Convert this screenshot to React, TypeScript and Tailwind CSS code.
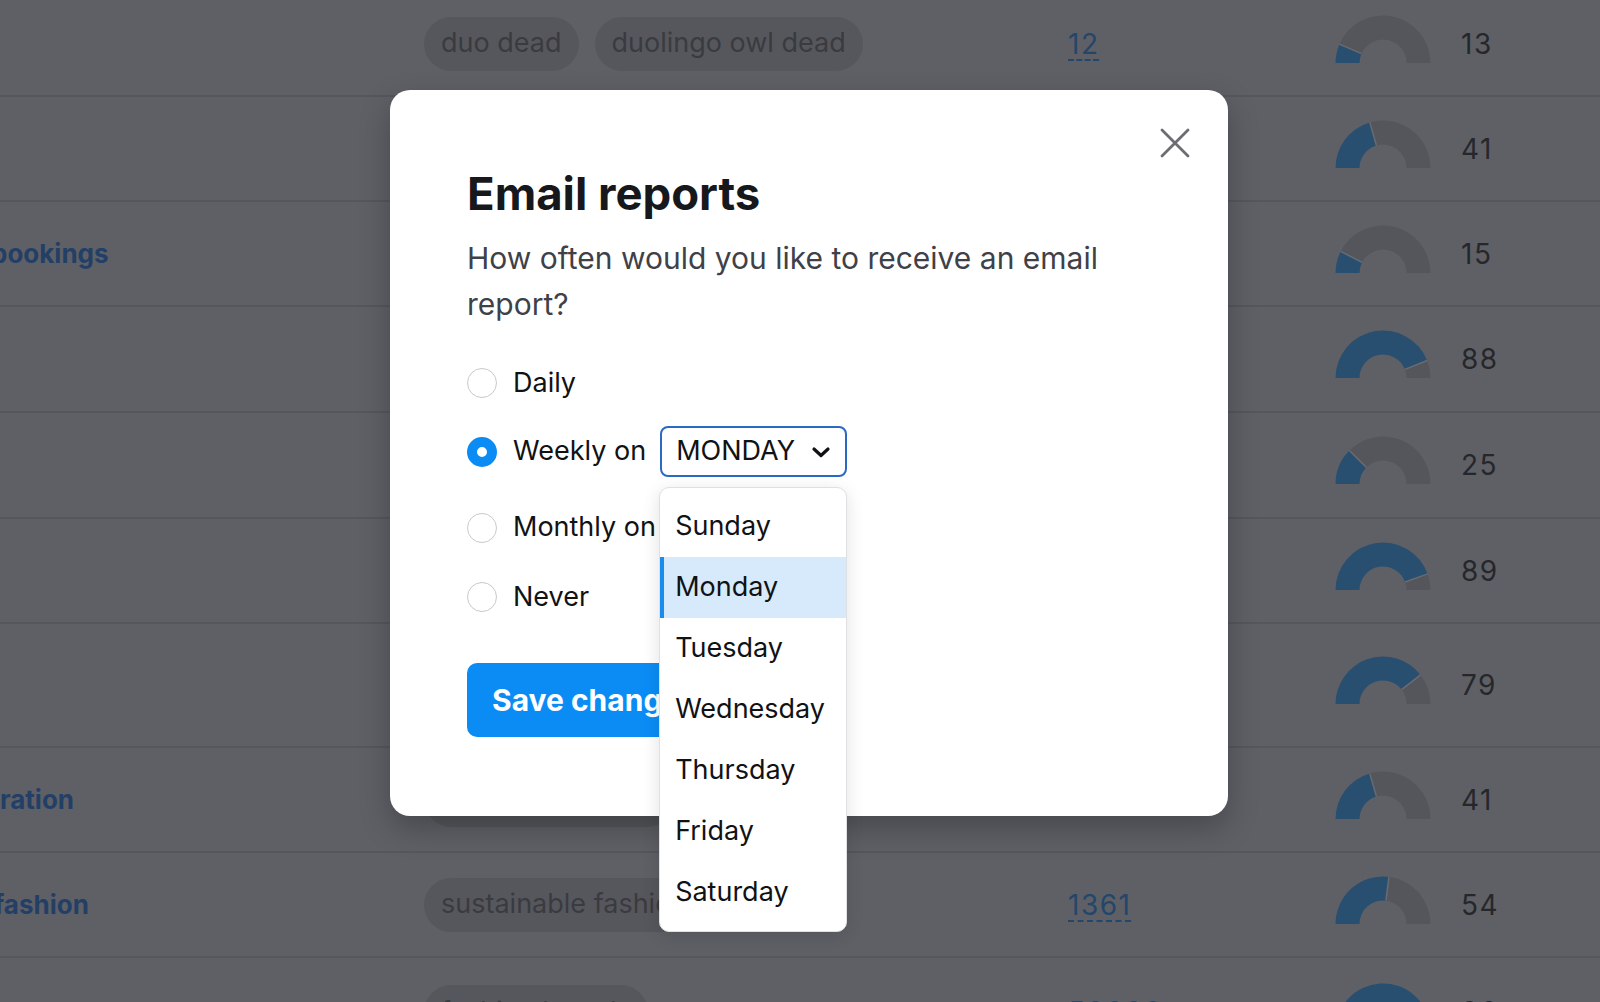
import { useState } from 'react';

type Row = {
  h: string;
  kw: string;
  kwCls: string;
  tags: string[];
  num: string;
  score: number;
};

const rows: Row[] = [
  { h: 'h-[105px]', kw: '', kwCls: '', tags: ['duo dead', 'duolingo owl dead'], num: '12', score: 13 },
  { h: 'h-[105px]', kw: '', kwCls: '', tags: ['duolingo meme'], num: '480', score: 41 },
  { h: 'h-[105px]', kw: 'bookings', kwCls: '-ml-[9px]', tags: ['hotel bookings'], num: '2900', score: 15 },
  { h: 'h-[106px]', kw: '', kwCls: '', tags: ['best crm'], num: '8100', score: 88 },
  { h: 'h-[106px]', kw: '', kwCls: '', tags: ['home workout'], num: '720', score: 25 },
  { h: 'h-[105px]', kw: '', kwCls: '', tags: ['seo tools'], num: '14800', score: 89 },
  { h: 'h-[124px]', kw: '', kwCls: '', tags: ['email marketing'], num: '9900', score: 79 },
  { h: 'h-[105px]', kw: 'ration', kwCls: 'ml-0', tags: ['home decoration'], num: '', score: 41 },
  { h: 'h-[105px]', kw: 'fashion', kwCls: '-ml-[6px]', tags: ['sustainable fashion'], num: '1361', score: 54 },
  { h: 'h-[110px]', kw: '', kwCls: '', tags: ['fashion brands'], num: '50000', score: 96 },
];

function pt(cx: number, cy: number, r: number, a: number) {
  return [cx + r * Math.cos(a), cy - r * Math.sin(a)];
}

function Gauge({ value }: { value: number }) {
  const cx = 48;
  const cy = 48;
  const R = 47.5;
  const r = 23.5;
  const mid = Math.PI * (1 - value / 100);
  const [ox0, oy0] = pt(cx, cy, R, Math.PI);
  const [ox1, oy1] = pt(cx, cy, R, mid);
  const [ix1, iy1] = pt(cx, cy, r, mid);
  const [ix0, iy0] = pt(cx, cy, r, Math.PI);
  const [ox2, oy2] = pt(cx, cy, R, 0);
  const [ix2, iy2] = pt(cx, cy, r, 0);
  const blue = `M${ox0} ${oy0} A${R} ${R} 0 0 1 ${ox1} ${oy1} L${ix1} ${iy1} A${r} ${r} 0 0 0 ${ix0} ${iy0} Z`;
  const gray = `M${ox1} ${oy1} A${R} ${R} 0 0 1 ${ox2} ${oy2} L${ix2} ${iy2} A${r} ${r} 0 0 0 ${ix1} ${iy1} Z`;
  return (
    <svg width="96" height="58" viewBox="0 0 96 58">
      <path d={gray} fill="#55565c" />
      <path d={blue} fill="#284f70" />
      <line x1={ix1} y1={iy1} x2={ox1} y2={oy1} stroke="#6a6b71" strokeWidth="1.5" />
    </svg>
  );
}

function Radio({ checked }: { checked?: boolean }) {
  return checked ? (
    <span className="w-[30px] h-[30px] rounded-full border-[10px] border-[#0b8cf5] bg-white shrink-0" />
  ) : (
    <span className="w-[30px] h-[30px] rounded-full border-[1.5px] border-[#c8c9cd] bg-white shrink-0" />
  );
}

const days = ['Sunday', 'Monday', 'Tuesday', 'Wednesday', 'Thursday', 'Friday', 'Saturday'];

export default function App() {
  const [day] = useState('Monday');

  return (
    <div className="relative w-[1600px] h-[1002px] overflow-hidden bg-[#5f6066] font-['Inter',sans-serif]">
      {/* Table behind the overlay */}
      <div className="-mt-[8px] flex flex-col">
        {rows.map((row, i) => (
          <div key={i} className={`${row.h} flex items-center border-b-2 border-[#56575d] shrink-0`}>
            <div className="w-[424px] shrink-0 overflow-hidden">
              {row.kw && (
                <div className={`${row.kwCls} text-[26px] font-bold text-[#233f66] whitespace-nowrap`}>{row.kw}</div>
              )}
            </div>
            <div className="w-[644px] shrink-0 flex gap-[16px]">
              {row.tags.map((t) => (
                <span
                  key={t}
                  className="h-[54px] px-[17px] flex items-center rounded-full bg-[#56575c] text-[27px] text-[#3a3b40] whitespace-nowrap"
                >
                  {t}
                </span>
              ))}
            </div>
            <div className="w-[267px] shrink-0">
              {row.num && (
                <span className="text-[28px] tracking-[1.5px] text-[#23466b] underline decoration-dashed decoration-2 underline-offset-[6px]">
                  {row.num}
                </span>
              )}
            </div>
            <div className="w-[126px] shrink-0 flex">
              <Gauge value={row.score} />
            </div>
            <div className="text-[28px] tracking-[1.5px] text-[#26272b]">{row.score}</div>
          </div>
        ))}
      </div>

      {/* Modal */}
      <div className="absolute left-[390px] top-[90px] w-[838px] rounded-[20px] bg-white px-[77px] pt-[77px] pb-[79px] shadow-[0_12px_30px_rgba(0,0,0,0.25)]">
        <button className="absolute right-[38px] top-[38px] w-[30px] h-[30px]">
          <svg width="30" height="30" viewBox="0 0 30 30">
            <path d="M2 2 L28 28 M28 2 L2 28" stroke="#6b6d73" strokeWidth="2.8" strokeLinecap="round" />
          </svg>
        </button>

        <h1 className="text-[45.5px] leading-[53px] font-bold text-[#17181c]">Email reports</h1>
        <p className="mt-[15px] max-w-[690px] text-[30px] leading-[46px] text-[#3f4148]">
          How often would you like to receive an email report?
        </p>

        <div className="mt-[33px] flex flex-col text-[27px] text-[#111214]">
          <label className="h-[46px] flex items-center gap-[16px]">
            <Radio />
            <span>Daily</span>
          </label>

          <div className="mt-[20px] h-[51px] flex items-center">
            <Radio checked />
            <span className="ml-[16px]">Weekly on</span>
            <div className="relative ml-[14px] z-10">
              <div className="w-[187px] h-[51px] rounded-[8px] border-2 border-[#2a6ac2] flex items-center justify-between pl-[14px] pr-[14px]">
                <span>MONDAY</span>
                <svg width="20" height="12" viewBox="0 0 20 12">
                  <polyline points="3,3 10,9.5 17,3" fill="none" stroke="#111214" strokeWidth="3.2" strokeLinecap="round" strokeLinejoin="round" />
                </svg>
              </div>
              <div className="absolute left-[-1px] top-[61px] w-[188px] py-[8px] rounded-[10px] border border-[#dfe0e3] bg-white shadow-[0_4px_18px_rgba(0,0,0,0.12)]">
                {days.map((d) =>
                  d === day ? (
                    <div key={d} className="h-[61px] flex items-center pl-[11px] border-l-4 border-[#1a8cf0] bg-[#d6eafc]">
                      {d}
                    </div>
                  ) : (
                    <div key={d} className="h-[61px] flex items-center pl-[15px]">
                      {d}
                    </div>
                  )
                )}
              </div>
            </div>
          </div>

          <div className="mt-[25px] h-[51px] flex items-center gap-[16px]">
            <Radio />
            <span>Monthly on</span>
          </div>

          <label className="mt-[21px] h-[46px] flex items-center gap-[16px]">
            <Radio />
            <span>Never</span>
          </label>
        </div>

        <button className="mt-[43px] h-[74px] px-[25px] rounded-[10px] bg-[#0b8cf5] text-white text-[30px] font-bold">
          Save changes
        </button>
      </div>
    </div>
  );
}
